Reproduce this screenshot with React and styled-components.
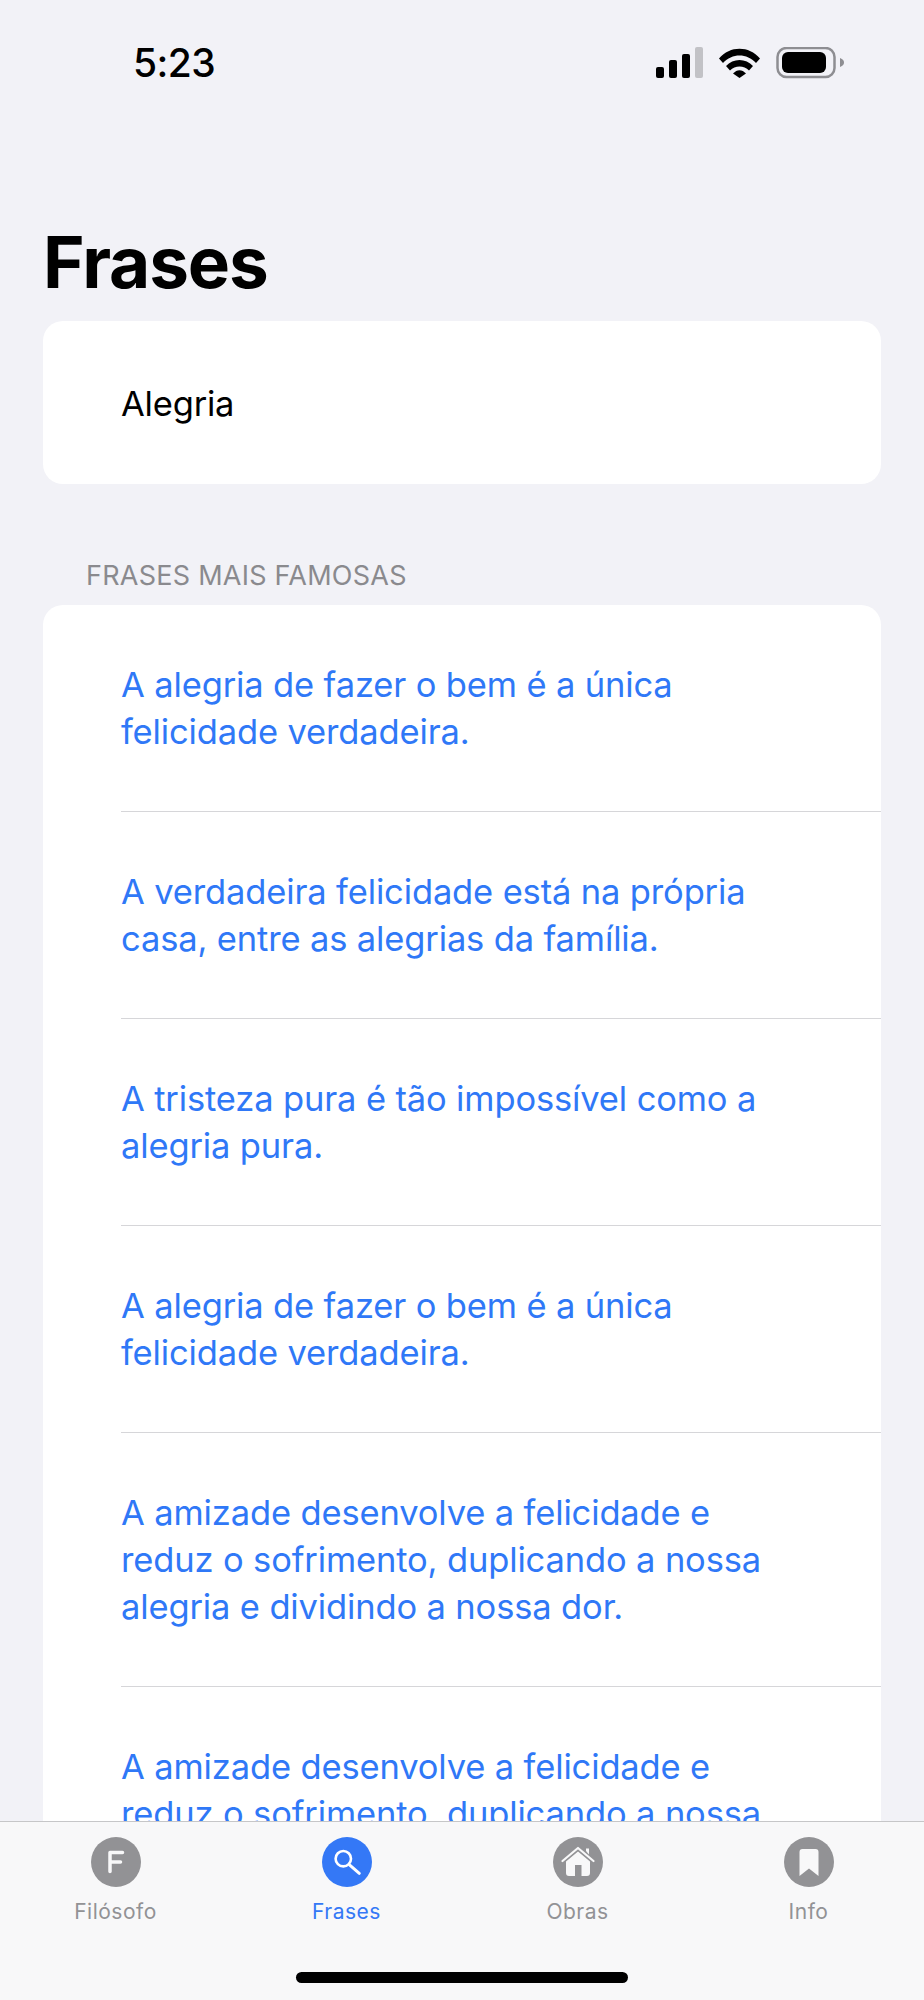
import React from "react";
import styled, { createGlobalStyle } from "styled-components";

const Global = createGlobalStyle`
  html, body { margin: 0; padding: 0; }
  body { background: #f2f2f7; font-family: Inter, "Liberation Sans", sans-serif; }
`;

const Screen = styled.div`
  position: relative;
  width: 924px;
  height: 2000px;
  overflow: hidden;
  background: #f2f2f7;
`;

const StatusBar = styled.div`
  display: flex;
  justify-content: space-between;
  align-items: flex-start;
  height: 110px;
  padding: 40px 78px 0 133px;
  box-sizing: border-box;
`;

const Time = styled.div`
  font-size: 39px;
  line-height: 46px;
  font-weight: 500;
  color: #000;
  letter-spacing: -0.6px;
`;

const StatusIcons = styled.svg`
  display: block;
  margin-top: 7px;
`;

const Title = styled.h1`
  margin: 102px 0 0 43px;
  height: 109px;
  font-size: 71px;
  line-height: 100px;
  font-weight: 700;
  color: #000;
  letter-spacing: -1.1px;
`;

const Card = styled.div`
  margin: 0 43px;
  background: #fff;
  border-radius: 20px;
  overflow: hidden;
`;

const SearchText = styled.div`
  height: 163px;
  padding-left: 78px;
  font-size: 34.5px;
  line-height: 166px;
  color: #000;
  letter-spacing: -0.2px;
`;

const SectionHeader = styled.div`
  margin: 77px 0 0 86px;
  height: 44px;
  font-size: 27px;
  line-height: 30px;
  color: #8a8a8e;
  letter-spacing: 0.25px;
`;

const QuoteRow = styled.div`
  margin-left: 78px;
  padding: 56px 100px 56px 0;
  border-bottom: 1px solid #d6d6d9;
  font-size: 34.5px;
  line-height: 47px;
  letter-spacing: -0.14px;
  color: #2f78f7;
`;

const TabBar = styled.nav`
  position: absolute;
  left: 0;
  right: 0;
  bottom: 0;
  height: 179px;
  display: grid;
  grid-template-columns: repeat(4, 231px);
  box-sizing: border-box;
  background: #f8f8f9;
  border-top: 1px solid #c6c6c8;
`;

const Tab = styled.div`
  display: flex;
  flex-direction: column;
  align-items: center;
  padding-top: 15px;
  color: ${(p) => (p.$active ? "#3478f6" : "#929295")};
`;

const TabIcon = styled.div`
  width: 50px;
  height: 50px;
  border-radius: 50%;
  display: flex;
  align-items: center;
  justify-content: center;
  background: ${(p) => (p.$active ? "#3478f6" : "#929295")};
`;

const TabLabel = styled.div`
  margin-top: 12px;
  font-size: 21px;
  line-height: 26px;
  font-weight: 400;
  letter-spacing: 0.5px;
`;

const HomeIndicator = styled.div`
  position: absolute;
  left: 296px;
  bottom: 17px;
  width: 332px;
  height: 11px;
  border-radius: 6px;
  background: #000;
`;

const quotes = [
  "A alegria de fazer o bem é a única felicidade verdadeira.",
  "A verdadeira felicidade está na própria casa, entre as alegrias da família.",
  "A tristeza pura é tão impossível como a alegria pura.",
  "A alegria de fazer o bem é a única felicidade verdadeira.",
  "A amizade desenvolve a felicidade e reduz o sofrimento, duplicando a nossa alegria e dividindo a nossa dor.",
  "A amizade desenvolve a felicidade e reduz o sofrimento, duplicando a nossa alegria e dividindo a nossa dor.",
];

const Status = () => (
  <StatusIcons width="190" height="32" viewBox="0 0 190 32">
    <rect x="0" y="20" width="8" height="11" rx="2" fill="#000" />
    <rect x="13" y="13" width="8" height="18" rx="2" fill="#000" />
    <rect x="26" y="7" width="8" height="24" rx="2" fill="#000" />
    <rect x="39" y="0" width="8" height="31" rx="2" fill="#c2c2c6" />
    <path d="M63 11.5C74 -1.5 93 -1.5 104 11.5L100 16C91 6 76 6 67 16Z" fill="#000" />
    <path d="M70 19C77 11 90 11 97 19L93 23.5C88 18 79 18 74 23.5Z" fill="#000" />
    <path d="M77 26.5C81 22 86 22 90 26.5L83.5 31Z" fill="#000" />
    <rect x="121.5" y="1" width="57" height="29" rx="9" fill="none" stroke="#8e8e92" strokeWidth="2.5" />
    <rect x="126" y="5" width="44" height="21" rx="6" fill="#000" />
    <path d="M184 11C187 12 188 14 188 15.5C188 17 187 19 184 20Z" fill="#8e8e92" />
  </StatusIcons>
);

const App = () => (
  <Screen>
    <Global />
    <StatusBar>
      <Time>5:23</Time>
      <Status />
    </StatusBar>
    <Title>Frases</Title>
    <Card>
      <SearchText>Alegria</SearchText>
    </Card>
    <SectionHeader>FRASES MAIS FAMOSAS</SectionHeader>
    <Card>
      {quotes.map((q, i) => (
        <QuoteRow key={i}>{q}</QuoteRow>
      ))}
    </Card>
    <TabBar>
      <Tab>
        <TabIcon>
          <svg width="28" height="32" viewBox="0 0 28 32">
            <path d="M8 25.5V6.5H20.5M8 16H18.5" fill="none" stroke="#f8f8f9" strokeWidth="3.5" strokeLinecap="round" strokeLinejoin="round" />
          </svg>
        </TabIcon>
        <TabLabel>Filósofo</TabLabel>
      </Tab>
      <Tab $active>
        <TabIcon $active>
          <svg width="32" height="32" viewBox="0 0 32 32">
            <circle cx="12.3" cy="12.7" r="7.7" fill="none" stroke="#fff" strokeWidth="2.6" />
            <path d="M18.5 18.8L28.3 27.3" stroke="#fff" strokeWidth="3" strokeLinecap="round" />
          </svg>
        </TabIcon>
        <TabLabel>Frases</TabLabel>
      </Tab>
      <Tab>
        <TabIcon>
          <svg width="34" height="32" viewBox="0 0 34 32">
            <path d="M1.5 15L17 2L32.5 15" fill="none" stroke="#f8f8f9" strokeWidth="2.2" strokeLinecap="round" strokeLinejoin="round" />
            <path d="M25 5V2.5H28V8.5Z" fill="#f8f8f9" />
            <path fillRule="evenodd" d="M5 15.5L17 5.5L29 15.5V27a3 3 0 0 1-3 3H8a3 3 0 0 1-3-3ZM14 19V30H20.5V19Z" fill="#f8f8f9" />
          </svg>
        </TabIcon>
        <TabLabel>Obras</TabLabel>
      </Tab>
      <Tab>
        <TabIcon>
          <svg width="22" height="34" viewBox="0 0 22 34">
            <path d="M1.5 7a3 3 0 0 1 3-3h13a3 3 0 0 1 3 3v24L11 23.5 1.5 31Z" fill="#f8f8f9" />
          </svg>
        </TabIcon>
        <TabLabel>Info</TabLabel>
      </Tab>
    </TabBar>
    <HomeIndicator />
  </Screen>
);

export default App;
